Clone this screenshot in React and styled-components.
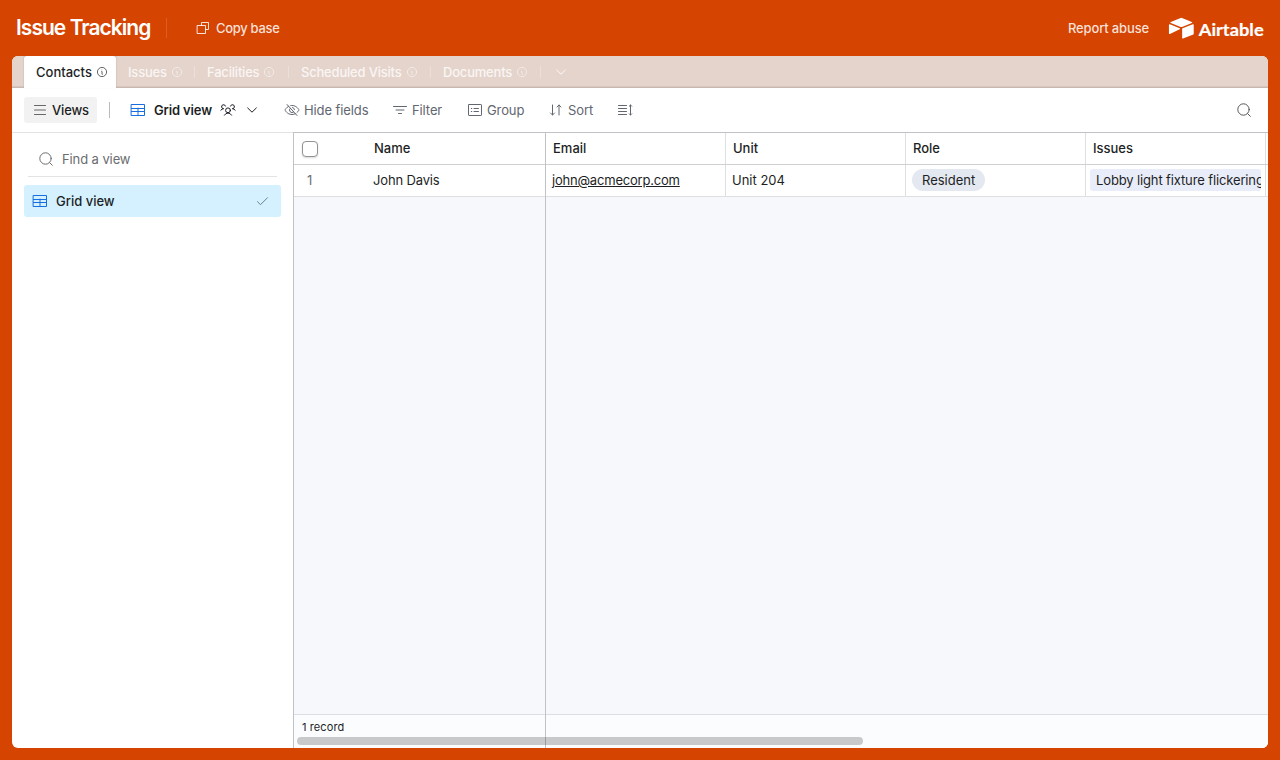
import styled, { createGlobalStyle } from "styled-components";

const GlobalStyle = createGlobalStyle`
    * {
        box-sizing: border-box;
    }
    body {
        margin: 0;
        font-family: Inter, "Liberation Sans", sans-serif;
        font-size: 13px;
        line-height: 18px;
        color: #1d1f25;
    }
`

const Page = styled.div`
    display: flex;
    flex-direction: column;
    width: 1280px;
    height: 760px;
    padding: 0 12px 12px;
    overflow: hidden;
    background: #d54401;
`

const Header = styled.header`
    display: flex;
    align-items: center;
    flex: 0 0 56px;
    padding: 0 4px;
    color: #fff;
`

const Title = styled.h1`
    width: 134px;
    margin: 0;
    font-size: 21px;
    font-weight: 600;
    line-height: 26px;
    letter-spacing: -0.97px;
    white-space: nowrap;
`

const HeaderDivider = styled.div`
    width: 1px;
    height: 20px;
    margin: 0 28px 0 16px;
    background: rgba(255, 255, 255, 0.14);
`

const HeaderAction = styled.div`
    display: flex;
    align-items: center;
    gap: 5px;
    margin-left: ${({ end }) => end ? 'auto' : '0'};
    margin-right: ${({ end }) => end ? '19px' : '0'};
    font-weight: 500;
    letter-spacing: ${({ end }) => end ? '-0.15px' : '-0.3px'};
    color: rgba(255, 255, 255, 0.85);
    white-space: nowrap;
`

const Panel = styled.main`
    display: flex;
    flex-direction: column;
    flex: 1;
    min-height: 0;
    border-radius: 6px;
    overflow: hidden;
    background: #fff;
`

const Tabs = styled.nav`
    display: flex;
    flex: 0 0 32px;
    padding-left: 12px;
    background: #e5d4cc;
    box-shadow: inset 0 -1px 0 #c9b8b1, inset 0 -2px 0 #d6c6be;
`

const Tab = styled.div`
    display: flex;
    align-items: center;
    gap: 4px;
    width: ${({ width }) => width}px;
    padding-left: 12px;
    font-weight: 500;
    letter-spacing: ${({ active }) => active ? '0' : '-0.2px'};
    white-space: nowrap;
    color: ${({ active }) => active ? '#1d1f25' : 'rgba(255, 255, 255, 0.8)'};
    background: ${({ active }) => active ? '#fff' : 'transparent'};
    border-radius: 3px 3px 0 0;
    box-shadow: ${({ active }) => active ? '0 -1px 2px rgba(0, 0, 0, 0.2)' : 'none'};
`

const TabDivider = styled.div`
    width: 1px;
    height: 12px;
    align-self: center;
    background: rgba(255, 255, 255, 0.25);
`

const MoreTabs = styled.div`
    display: flex;
    align-items: center;
    padding-left: 12px;
    color: rgba(255, 255, 255, 0.85);
`

const Toolbar = styled.div`
    display: flex;
    align-items: center;
    flex: 0 0 45px;
    padding: 0 16px 0 12px;
    border-bottom: 1px solid #e2e3e5;
`

const ViewsButton = styled.div`
    display: flex;
    align-items: center;
    gap: 4px;
    width: 73px;
    height: 26px;
    padding-left: 8px;
    border-radius: 3px;
    font-weight: 500;
    letter-spacing: -0.15px;
    background: #f2f2f2;
`

const ToolbarDivider = styled.div`
    width: 1px;
    height: 16px;
    margin: 0 20px 0 12px;
    background: #b9babd;
`

const ViewName = styled.div`
    display: flex;
    align-items: center;
    gap: 8px;
    width: 130px;
    margin-right: 24px;
    font-weight: 600;
    letter-spacing: -0.15px;
    white-space: nowrap;
`

const ToolButton = styled.div`
    display: flex;
    align-items: center;
    gap: 4px;
    width: ${({ width }) => width}px;
    letter-spacing: -0.1px;
    white-space: nowrap;
    color: #616670;
`

const SearchButton = styled.div`
    display: flex;
    margin-left: auto;
    color: #53565c;
`

const Content = styled.div`
    display: flex;
    flex: 1;
    min-height: 0;
`

const Sidebar = styled.aside`
    width: 281px;
    padding: 9px 12px;
`

const FindView = styled.div`
    display: flex;
    align-items: center;
    gap: 8px;
    height: 35px;
    margin: 0 4px 8px;
    padding-left: 10px;
    border-bottom: 1px solid #e2e3e4;
    letter-spacing: -0.1px;
    color: #6b6c6f;
`

const ViewItem = styled.div`
    display: flex;
    align-items: center;
    gap: 8px;
    height: 32px;
    padding: 0 11px 0 8px;
    border-radius: 3px;
    font-weight: 500;
    background: #d5f1ff;
`

const Check = styled.div`
    display: flex;
    margin-left: auto;
    color: #6d7f89;
`

const Grid = styled.section`
    position: relative;
    display: flex;
    flex: 1;
    min-width: 0;
    margin-top: -1px;
    border-left: 1px solid #c1c2c5;
    border-top: 1px solid #c1c2c5;
    overflow: hidden;
    background: #f6f8fc;
`

const Pane = styled.div`
    display: flex;
    flex-direction: column;
    flex: ${({ fixed }) => fixed ? '0 0 252px' : '1'};
    min-width: 0;
    overflow: hidden;
    border-right: ${({ fixed }) => fixed ? '1px solid #c1c2c5' : 'none'};
`

const Row = styled.div`
    display: flex;
    flex: 0 0 32px;
    min-width: ${({ wide }) => wide ? '740px' : '0'};
    background: #fff;
    border-bottom: 1px solid ${({ head }) => head ? '#cfd0d2' : '#dedfe1'};
`

const Cell = styled.div`
    display: flex;
    align-items: center;
    flex: 0 0 180px;
    padding: 0 4px 1px ${({ pad }) => pad ?? 6}px;
    border-right: 1px solid #dedfe1;
    font-weight: ${({ head }) => head ? 500 : 400};
    white-space: nowrap;
`

const NumberCell = styled.div`
    display: flex;
    align-items: center;
    width: ${({ head }) => head ? 80 : 79}px;
    padding-bottom: ${({ head }) => head ? 0 : 1}px;
    padding-left: ${({ head }) => head ? 8 : 13}px;
    color: #6b6f76;
`

const NameCell = styled.div`
    display: flex;
    align-items: center;
    padding-bottom: 1px;
    font-weight: ${({ head }) => head ? 500 : 400};
    letter-spacing: ${({ head }) => head ? '0' : '-0.15px'};
`

const Checkbox = styled.div`
    width: 16px;
    height: 16px;
    border: 1px solid #929396;
    border-radius: 4px;
    background: #fff;
    box-shadow: 0 1px 2px rgba(0, 0, 0, 0.15);
`

const Email = styled.span`
    letter-spacing: -0.2px;
    text-decoration: underline;
`

const RolePill = styled.span`
    height: 22px;
    padding: 0 10px;
    border-radius: 11px;
    line-height: 22px;
    background: #e4e8f0;
`

const LinkedRecord = styled.span`
    width: 171px;
    height: 22px;
    padding-left: 6px;
    border-radius: 3px;
    line-height: 22px;
    letter-spacing: -0.13px;
    overflow: hidden;
    background: #e9edf9;
`

const Footer = styled.div`
    height: 34px;
    margin-top: auto;
    padding: 3px 8px;
    border-top: 1px solid #dcdee3;
    font-size: 11px;
    letter-spacing: 0.1px;
    background: #fbfcfe;
`

const ScrollThumb = styled.div`
    position: absolute;
    left: 3px;
    bottom: 3px;
    width: 566px;
    height: 8px;
    border-radius: 4px;
    background: rgba(0, 0, 0, 0.2);
`

const Icon = ({ size = 16, children }) => (
    <svg width={size} height={size} viewBox="0 0 16 16" fill="none" stroke="currentColor" strokeLinecap="round" strokeLinejoin="round" style={{ flexShrink: 0 }}>
        {children}
    </svg>
)

const InfoIcon = () => (
    <svg width="12" height="12" viewBox="0 0 12 12" fill="none" stroke="currentColor" strokeWidth="0.8" opacity="0.85">
        <circle cx="6" cy="6" r="4.6" />
        <path d="M5.4 5.4H6v2.9h.7" />
        <circle cx="5.9" cy="3.8" r="0.35" fill="currentColor" stroke="none" />
    </svg>
)

const CopyIcon = () => (
    <Icon>
        <path d="M6.5 5.500v-3h7v7h-3M2.500 5.500h8v8h-8z" />
    </Icon>
)

const MenuIcon = () => (
    <Icon>
        <path d="M2.5 3.5h11M2.5 8h11M2.5 12.5h11" stroke="#66686c" strokeWidth="1.2" />
    </Icon>
)

const GridIcon = () => (
    <Icon>
        <path d="M8 6.5v6" stroke="#166ee1" strokeWidth="2" opacity="0.5" />
        <path d="M1.5 2.5h13v11h-13zM1.5 6.5h13M1.5 9.5h13" stroke="#166ee1" />
    </Icon>
)

const PeopleIcon = () => (
    <Icon>
        <circle cx="8" cy="8.3" r="2.4" />
        <path d="M4.4 13.2a4.1 4.1 0 0 1 7.2 0M.8 8.2a3.8 3.8 0 0 1 2.9-1.5 2 2 0 1 1 1.8-2.6M15.2 8.2a3.8 3.8 0 0 0-2.9-1.5 2 2 0 1 0-1.8-2.6" />
    </Icon>
)

const ChevronIcon = () => (
    <Icon>
        <path d="M3.7 6 8 10.2 12.3 6" />
    </Icon>
)

const HideIcon = () => (
    <Icon>
        <path d="M3 2.5l10 11M9.7 9.9a2.5 2.5 0 0 1-3.4-3.7M4.6 4.3C2 5.6 1 8 1 8s2 4.5 7 4.5a7.3 7.3 0 0 0 3.4-.8M13 10.5C14.4 9.3 15 8 15 8s-2-4.5-7-4.5a8 8 0 0 0-1.3.1M8.5 5.5a2.5 2.5 0 0 1 2 2.2" />
    </Icon>
)

const FilterIcon = () => (
    <Icon>
        <path d="M1.5 4.5h13M4 8h8M6.5 11.5h3" />
    </Icon>
)

const GroupIcon = () => (
    <Icon>
        <rect x="1.5" y="2.5" width="13" height="11" rx="0.6" />
        <path d="M7 6.5h4.5M7 9.5h4.5M4.3 6.5h.5M4.3 9.5h.5" />
    </Icon>
)

const SortIcon = () => (
    <Icon>
        <path d="M4.5 3v10M2.5 11l2 2 2-2M11 13V3M9 5l2-2 2 2" />
    </Icon>
)

const RowHeightIcon = () => (
    <Icon>
        <path d="M1.5 3.5h8M1.5 6.5h8M1.5 9.5h8M1.5 12.5h8M13.5 3v10M12.3 4.2l1.2-1.2 1.2 1.2M12.3 11.8l1.2 1.2 1.2-1.2" />
    </Icon>
)

const SearchIcon = () => (
    <Icon>
        <circle cx="7.5" cy="7.5" r="5.7" />
        <path d="M11.6 11.6l2.7 2.7" />
    </Icon>
)

const CheckIcon = () => (
    <Icon>
        <path d="M3.5 8.7l3 3 7-7" />
    </Icon>
)

const AirtableLogo = () => (
    <svg width="96" height="22" viewBox="0 0 96 22" fill="#fff">
        <g transform="translate(-0.6 -0.6) scale(0.14)">
            <path d="M90 12.4 24 39.7c-3.6 1.5-3.6 6.7.1 8.2l66.3 26.2a24.6 24.6 0 0 0 18.1 0l66.2-26.2c3.7-1.5 3.7-6.7.1-8.2l-66-27.3a24.6 24.6 0 0 0-18.8 0" />
            <path d="M105.3 88.5v65.6c0 3.1 3.2 5.2 6.1 4.1l73.8-28.7a4.4 4.4 0 0 0 2.8-4.1V59.8c0-3.1-3.2-5.2-6.1-4.1l-73.8 28.7a4.4 4.4 0 0 0-2.8 4.1" />
            <path d="M88.1 91.8 17.7 125.7c-2.9 1.4-6.7-.8-6.7-4V60.1c0-3 3.5-5.3 6.6-4.1l70.1 27.8c3.6 1.4 3.9 6.4.4 8" />
        </g>
        <text x="30.7" y="18.6" textLength="65" lengthAdjust="spacingAndGlyphs" fontFamily="Lato, sans-serif" fontSize="17.5" fontWeight="700" stroke="#fff" strokeWidth="0.2">Airtable</text>
    </svg>
)

const tabs = [
    { name: 'Issues', width: 78 },
    { name: 'Facilities', width: 93 },
    { name: 'Scheduled Visits', width: 141 },
    { name: 'Documents', width: 109 },
]

const columns = ['Email', 'Unit', 'Role', 'Issues']

const App = () => (
    <>
        <GlobalStyle />
        <Page>
            <Header>
                <Title>Issue Tracking</Title>
                <HeaderDivider />
                <HeaderAction>
                    <CopyIcon />
                    Copy base
                </HeaderAction>
                <HeaderAction end>Report abuse</HeaderAction>
                <AirtableLogo />
            </Header>
            <Panel>
                <Tabs>
                    <Tab active width={92}>Contacts <InfoIcon /></Tab>
                    {tabs.map(({ name, width }) => (
                        <div key={name} style={{ display: 'contents' }}>
                            <Tab width={width}>{name} <InfoIcon /></Tab>
                            <TabDivider />
                        </div>
                    ))}
                    <MoreTabs><ChevronIcon /></MoreTabs>
                </Tabs>
                <Toolbar>
                    <ViewsButton><MenuIcon />Views</ViewsButton>
                    <ToolbarDivider />
                    <ViewName>
                        <GridIcon />
                        Grid view
                        <PeopleIcon />
                        <ChevronIcon />
                    </ViewName>
                    <ToolButton width={108}><HideIcon />Hide fields</ToolButton>
                    <ToolButton width={75}><FilterIcon />Filter</ToolButton>
                    <ToolButton width={81}><GroupIcon />Group</ToolButton>
                    <ToolButton width={69}><SortIcon />Sort</ToolButton>
                    <ToolButton width={16}><RowHeightIcon /></ToolButton>
                    <SearchButton><SearchIcon /></SearchButton>
                </Toolbar>
                <Content>
                    <Sidebar>
                        <FindView><SearchIcon />Find a view</FindView>
                        <ViewItem>
                            <GridIcon />
                            Grid view
                            <Check><CheckIcon /></Check>
                        </ViewItem>
                    </Sidebar>
                    <Grid>
                        <Pane fixed>
                            <Row head>
                                <NumberCell head><Checkbox /></NumberCell>
                                <NameCell head>Name</NameCell>
                            </Row>
                            <Row>
                                <NumberCell>1</NumberCell>
                                <NameCell>John Davis</NameCell>
                            </Row>
                            <Footer>1 record</Footer>
                        </Pane>
                        <Pane>
                            <Row head wide>
                                {columns.map((name) => <Cell head pad={7} key={name}>{name}</Cell>)}
                            </Row>
                            <Row wide>
                                <Cell><Email>john@acmecorp.com</Email></Cell>
                                <Cell>Unit 204</Cell>
                                <Cell><RolePill>Resident</RolePill></Cell>
                                <Cell pad={4}><LinkedRecord>Lobby light fixture flickering</LinkedRecord></Cell>
                            </Row>
                            <Footer />
                        </Pane>
                        <ScrollThumb />
                    </Grid>
                </Content>
            </Panel>
        </Page>
    </>
)

export default App
